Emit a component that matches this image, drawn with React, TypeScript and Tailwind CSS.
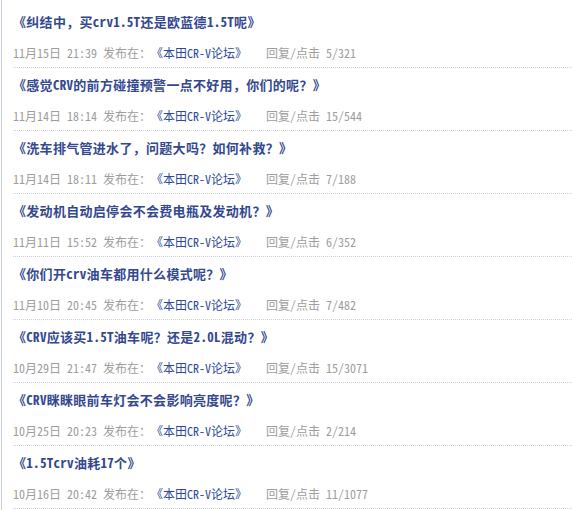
const posts = [
  { title: "《纠结中，买crv1.5T还是欧蓝德1.5T呢》", date: "11月15日", time: "21:39", stat: "5/321" },
  { title: "《感觉CRV的前方碰撞预警一点不好用，你们的呢？》", date: "11月14日", time: "18:14", stat: "15/544" },
  { title: "《洗车排气管进水了，问题大吗？如何补救？》", date: "11月14日", time: "18:11", stat: "7/188" },
  { title: "《发动机自动启停会不会费电瓶及发动机？》", date: "11月11日", time: "15:52", stat: "6/352" },
  { title: "《你们开crv油车都用什么模式呢？》", date: "11月10日", time: "20:45", stat: "7/482" },
  { title: "《CRV应该买1.5T油车呢？还是2.0L混动？》", date: "10月29日", time: "21:47", stat: "15/3071" },
  { title: "《CRV眯眯眼前车灯会不会影响亮度呢？》", date: "10月25日", time: "20:23", stat: "2/214" },
  { title: "《1.5Tcrv油耗17个》", date: "10月16日", time: "20:42", stat: "11/1077" },
];

const font = {
  fontFamily: '"Noto Sans Mono CJK SC", "Noto Sans CJK SC", sans-serif',
};

export default function App() {
  return (
    <div className="w-[572px] h-[510px] bg-white overflow-hidden" style={font}>
      <div className="ml-px border-l-[1.5px] border-[#c9cde6] pt-[5px] h-full">
        {posts.map((p, i) => (
          <div
            key={i}
            className="ml-[11px] pt-[8px] pb-[5px] border-b border-dotted border-[#cfcfe2]"
          >
            <div className="text-[13px] leading-[18px] font-bold tracking-[0.3px] text-[#33488f] whitespace-nowrap">
              {p.title}
            </div>
            <div className="mt-[13px] text-[12px] leading-[18px] text-[#9d9d9d] whitespace-nowrap flex">
              <span>
                {p.date} {p.time} 发布在：
              </span>
              <span className="text-[#2d4a9a]">《本田CR-V论坛》</span>
              <span className="ml-[19px]">回复/点击 {p.stat}</span>
            </div>
          </div>
        ))}
      </div>
    </div>
  );
}
